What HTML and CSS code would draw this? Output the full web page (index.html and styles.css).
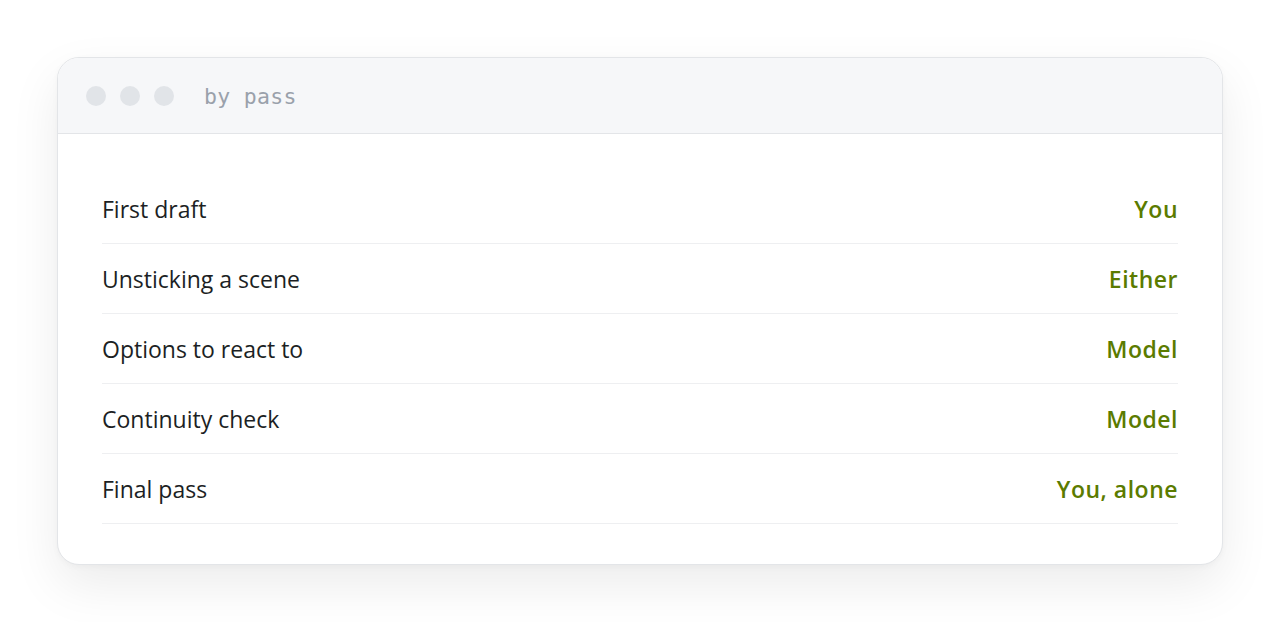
FILE: index.html
```html
<!DOCTYPE html>
<html>
<head>
<meta charset="utf-8">
<link rel="stylesheet" href="styles.css">
</head>
<body>
<div class="page">
  <div class="card">
    <div class="titlebar">
      <div class="dots">
        <span class="dot"></span><span class="dot"></span><span class="dot"></span>
      </div>
      <span class="title">by pass</span>
    </div>
    <div class="body">
      <div class="row"><span class="label">First draft</span><span class="value">You</span></div>
      <div class="row"><span class="label">Unsticking a scene</span><span class="value">Either</span></div>
      <div class="row"><span class="label">Options to react to</span><span class="value">Model</span></div>
      <div class="row"><span class="label">Continuity check</span><span class="value">Model</span></div>
      <div class="row"><span class="label">Final pass</span><span class="value">You, alone</span></div>
    </div>
  </div>
</div>
</body>
</html>
```
FILE: styles.css
```css
* { box-sizing: border-box; }
html, body { margin: 0; padding: 0; background: #ffffff; }
.page {
  padding: 57px 57px;
}
.card {
  width: 1166px;
  background: #ffffff;
  border: 1px solid #e3e5e8;
  border-radius: 22px;
  overflow: hidden;
  box-shadow: 0 20px 50px rgba(0,0,0,0.08), 0 2px 6px rgba(0,0,0,0.03);
}
.titlebar {
  height: 76px;
  background: #f6f7f9;
  border-bottom: 1px solid #e3e5e8;
  display: flex;
  align-items: center;
  padding-left: 28px;
}
.dots { display: flex; gap: 14px; }
.dot {
  width: 20px; height: 20px; border-radius: 50%;
  background: #e1e4e8;
}
.title {
  margin-left: 30px;
  padding-top: 2px;
  font-family: "DejaVu Sans Mono", monospace;
  font-size: 21.5px;
  color: #9aa1ab;
  letter-spacing: 0.3px;
}
.body {
  padding: 40px 44px 40px 44px;
}
.row {
  display: flex;
  justify-content: space-between;
  align-items: center;
  height: 70px;
  border-bottom: 1px solid #eeeff1;
  font-family: "Open Sans", "Noto Sans", sans-serif;
  font-size: 23px;
}
.label { color: #1c1f24; }
.value { color: #5b7b00; font-weight: 600; letter-spacing: 0.5px; }
```
